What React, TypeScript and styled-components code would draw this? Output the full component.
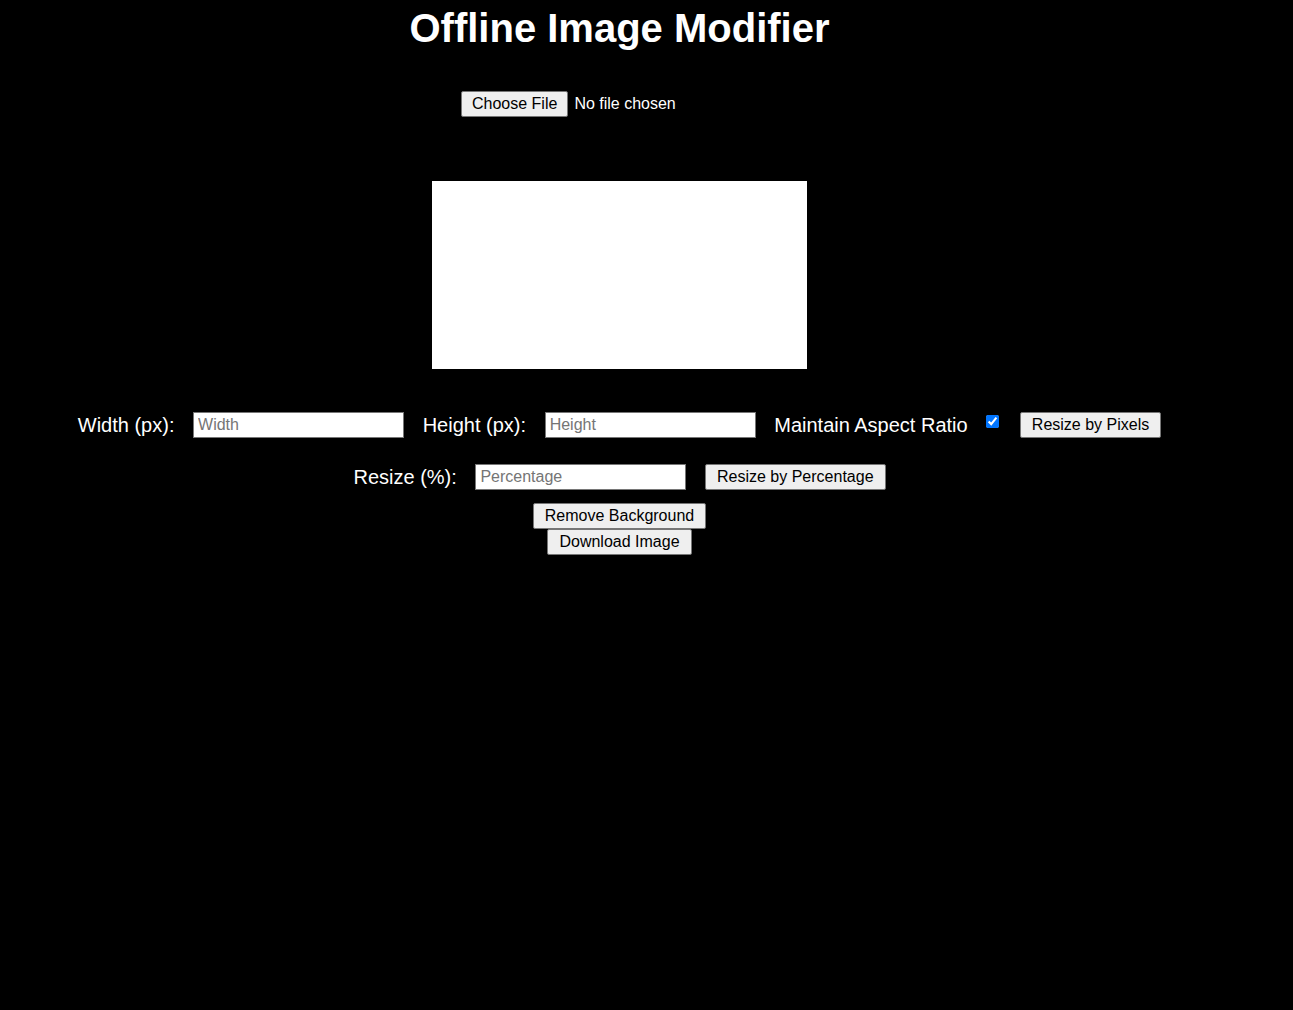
import React from "react";
import styled, { createGlobalStyle } from "styled-components";

const GlobalStyle = createGlobalStyle`
  body {
    margin: 0;
    background: #000;
    color: #fff;
    font-family: "Liberation Sans", Arial, sans-serif;
  }
`;

const Page = styled.div`
  width: 1239px;
  text-align: center;
`;

const Title = styled.h1`
  margin: 5px 0 0;
  font-size: 40px;
  line-height: 46px;
  font-weight: bold;
`;

const FileRow = styled.div`
  margin-top: 40px;
  display: flex;
  justify-content: center;
  height: 26px;
`;

const FileInput = styled.input`
  width: 317px;
  height: 26px;
  font-family: "Liberation Sans", Arial, sans-serif;
  font-size: 16px;
  color: #fff;
  padding: 0;

  &::file-selector-button {
    font-family: "Liberation Sans", Arial, sans-serif;
    font-size: 16px;
    line-height: 18px;
    color: #000;
    background: #efefef;
    border: 1px solid #767676;
    border-radius: 2px;
    padding: 3px 10px;
    margin-right: 6px;
  }
`;

const Preview = styled.div`
  margin: 64px auto 0;
  width: 375px;
  height: 188px;
  background: #fff;
`;

const Row = styled.div<{ $top: number }>`
  margin-top: ${(p) => p.$top}px;
  display: flex;
  justify-content: center;
  align-items: center;
  gap: 18.6px;
  height: 26px;
`;

const Label = styled.label`
  font-size: 20px;
  line-height: 23px;
  color: #fff;
`;

const TextInput = styled.input`
  box-sizing: border-box;
  width: 211px;
  height: 26px;
  margin: 0;
  padding: 1px 4px;
  border: 1px solid #767676;
  background: #fff;
  font-family: "Liberation Sans", Arial, sans-serif;
  font-size: 16px;
  color: #000;

  &::placeholder {
    color: #757575;
  }
`;

const Check = styled.input`
  width: 13px;
  height: 13px;
  margin: 0 2px 7px 0;
`;

const Button = styled.button`
  box-sizing: border-box;
  height: 26px;
  padding: 3px 11px;
  border: 1px solid #767676;
  border-radius: 2px;
  background: #efefef;
  color: #000;
  font-family: "Liberation Sans", Arial, sans-serif;
  font-size: 16px;
  line-height: 18px;
`;

const Stack = styled.div`
  margin-top: 13px;
  display: flex;
  flex-direction: column;
  align-items: center;
`;

export default function App() {
  return (
    <>
      <GlobalStyle />
      <Page>
        <Title>Offline Image Modifier</Title>

        <FileRow>
          <FileInput type="file" accept="image/*" />
        </FileRow>

        <Preview />

        <Row $top={43}>
          <Label>Width (px):</Label>
          <TextInput type="number" placeholder="Width" />
          <Label>Height (px):</Label>
          <TextInput type="number" placeholder="Height" />
          <Label>Maintain Aspect Ratio</Label>
          <Check type="checkbox" defaultChecked />
          <Button>Resize by Pixels</Button>
        </Row>

        <Row $top={26}>
          <Label>Resize (%):</Label>
          <TextInput type="number" placeholder="Percentage" />
          <Button>Resize by Percentage</Button>
        </Row>

        <Stack>
          <Button>Remove Background</Button>
          <Button>Download Image</Button>
        </Stack>
      </Page>
    </>
  );
}
